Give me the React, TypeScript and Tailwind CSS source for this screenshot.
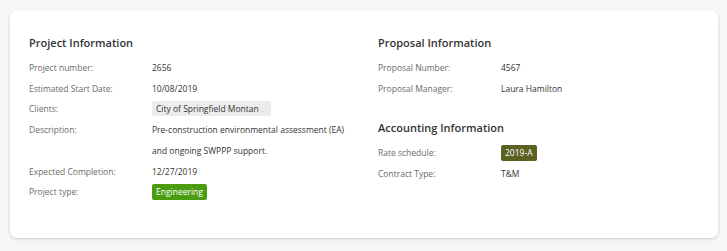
import type { ReactNode } from "react";

type RowProps = {
  label: string;
  children: ReactNode;
};

function Row({ label, children }: RowProps) {
  return (
    <div className="flex min-h-[20.7px] items-start text-[8.5px] leading-[20.7px]">
      <div className="w-[123px] shrink-0 text-[#6b6b6b]">{label}</div>
      <div className="text-[#333333]">{children}</div>
    </div>
  );
}

function Heading({ children }: { children: ReactNode }) {
  return (
    <h2 className="mb-[6px] text-[11px] leading-[18px] font-semibold text-[#333333]">
      {children}
    </h2>
  );
}

export default function App() {
  return (
    <div
      className="h-[251px] w-[727px] bg-[#f6f6f6] p-[10px] pr-[9px]"
      style={{ fontFamily: '"Open Sans", "Liberation Sans", sans-serif' }}
    >
      <section className="grid h-[228px] grid-cols-2 gap-x-[28px] rounded-[7px] bg-white px-[19px] pt-[24px] shadow-[0_1px_3px_rgba(0,0,0,0.18)]">
        <div>
          <Heading>Project Information</Heading>
          <Row label="Project number:">2656</Row>
          <Row label="Estimated Start Date:">10/08/2019</Row>
          <Row label="Clients:">
            <span className="inline-flex h-[15px] items-center rounded-[2px] bg-[#ececec] px-[4px] leading-[15px]">
              City of Springfield Montan
              <span className="ml-[2px] text-[#d6d6d6]">...</span>
            </span>
          </Row>
          <Row label="Description:">
            <span className="block w-[196px]">
              Pre-construction environmental assessment (EA) and ongoing SWPPP support.
            </span>
          </Row>
          <Row label="Expected Completion:">12/27/2019</Row>
          <Row label="Project type:">
            <span className="inline-flex h-[16px] items-center rounded-[2px] bg-[#4a9d10] px-[4px] leading-[16px] font-medium text-white">
              Engineering
            </span>
          </Row>
        </div>

        <div>
          <Heading>Proposal Information</Heading>
          <Row label="Proposal Number:">4567</Row>
          <Row label="Proposal Manager:">Laura Hamilton</Row>
          <div className="mt-[20px]">
            <Heading>Accounting Information</Heading>
            <Row label="Rate schedule:">
              <span className="inline-flex h-[16px] items-center rounded-[2px] bg-[#5b6221] px-[4px] leading-[16px] font-medium text-white">
                2019-A
              </span>
            </Row>
            <Row label="Contract Type:">T&amp;M</Row>
          </div>
        </div>
      </section>
    </div>
  );
}
